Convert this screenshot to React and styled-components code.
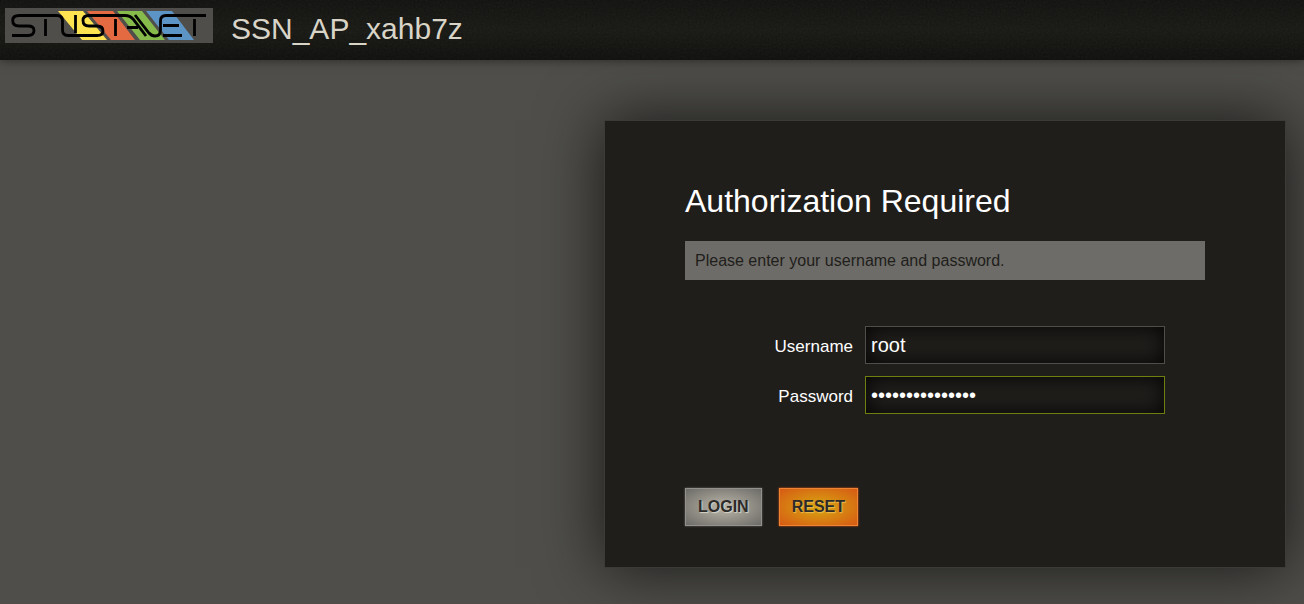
import React from 'react';
import styled, { createGlobalStyle } from 'styled-components';

const GlobalStyle = createGlobalStyle`
  *, *::before, *::after { box-sizing: border-box; }
  body {
    margin: 0;
    min-height: 100vh;
    background: #4f4e4a;
    color: #fff;
    font: 16px/20px "Liberation Sans", Arial, sans-serif;
  }
`;

const Header = styled.header`
  position: relative;
  display: flex;
  align-items: flex-start;
  gap: 18px;
  height: 60px;
  padding: 8px 5px;
  background: linear-gradient(#11110f, #171713 50%, #0e0e0c);
  box-shadow: 0 0 10px rgba(0, 0, 0, 0.5);
`;

const Grain = styled.svg`
  position: absolute;
  inset: 0;
  width: 100%;
  height: 100%;
  opacity: 0.06;
`;

const LogoLink = styled.a`
  position: relative;
  display: block;
  height: 35px;
  background: #4f4e4a;
`;

const HostName = styled.a`
  position: relative;
  color: #d8d4c8;
  font-size: 30px;
  line-height: 42px;
  text-decoration: none;
`;

const Main = styled.main`
  display: flex;
  justify-content: flex-end;
  padding: 60px 18px 36px;
`;

const Panel = styled.form`
  width: 682px;
  max-width: 100%;
  padding: 60px 80px 40px;
  border: 1px solid #3c3b38;
  background: #201e1b;
  box-shadow: 0 0 60px rgba(0, 0, 0, 0.7);
`;

const Title = styled.h1`
  margin: 0 0 20px;
  font-size: 32px;
  font-weight: 400;
  line-height: 40px;
`;

const Notice = styled.p`
  margin: 0 0 46px;
  padding: 10px 10px 9px;
  background: #6e6c68;
  color: #201e1b;
`;

const Fields = styled.div`
  display: grid;
  gap: 12px;
  margin-bottom: 74px;
`;

const Field = styled.div`
  display: grid;
  grid-template-columns: 168px 300px;
  column-gap: 12px;
  align-items: center;
`;

const Label = styled.label`
  font-size: 17px;
  text-align: right;
  padding-top: 4px;
`;

const Input = styled.input`
  width: 100%;
  height: 38px;
  margin: 0;
  padding: 0 5px;
  border: 1px solid ${(p) => (p.$valid ? '#6f7f10' : '#4f4e4a')};
  border-radius: 0;
  outline: none;
  background: #201e1b;
  box-shadow: inset 0 0 20px rgba(0, 0, 0, 0.9);
  color: #fff;
  font: 20px "Liberation Sans", Arial, sans-serif;
`;

const Actions = styled.div`
  display: flex;
  gap: 17px;
  padding-bottom: 1px;
`;

const buttonTones = {
  neutral: { inner: '#bcb7ab', outer: '#6c6b66', edge: '#92918d', glow: '#d8d4c8' },
  warning: { inner: '#d8a810', outer: '#d65a14', edge: '#f08435', glow: '#eebc50' },
};

const Button = styled.button`
  height: 38px;
  padding: 0 12px;
  border: 1px solid ${(p) => buttonTones[p.$tone].edge};
  background: radial-gradient(
    ellipse at center,
    ${(p) => buttonTones[p.$tone].inner},
    ${(p) => buttonTones[p.$tone].outer}
  );
  box-shadow: 0 0 2px ${(p) => buttonTones[p.$tone].outer};
  color: #2c2b29;
  font: bold 16px "Liberation Sans", Arial, sans-serif;
  text-shadow: 1px 1px 1px ${(p) => buttonTones[p.$tone].glow};
  text-transform: uppercase;
  cursor: pointer;
`;

function Logo() {
  return (
    <svg width="208" height="35" viewBox="5 8 208 35" role="img" aria-label="StuStaNet" display="block">
      <path d="M58 11H83L107 40H82Z" fill="#ffe452" />
      <path d="M87 11H113L135 40H111Z" fill="#e46a42" />
      <path d="M117 11H142L165 40H140Z" fill="#86bb4c" />
      <path d="M146 11H172L194 40H169Z" fill="#5c94c6" />
      <g fill="none" stroke="#000" strokeWidth="2.8">
        <path d="M12 35.500H28Q34 35.500 34 30.500Q34 26 28 26H19Q12.700 26 12.700 20.500Q12.700 15.500 19 15.500H57Q62.500 15.500 62.500 21V30Q62.500 35.500 68 35.500H97Q103 35.500 103 31Q103 26 97 26H89Q83 26 83 20.500Q83 15.500 89 15.500H125Q130 15.500 133 19L146 36" />
        <path d="M135 15L149 33Q151.500 36 155 36Q160.500 36 160.500 30V21Q160.500 15.500 166 15.500H206" />
        <path d="M45.500 19V36M75.500 15V33M115.500 19V36M194.500 19V36M127 27.500H138M163 25.500H179M163 35.500H182" />
      </g>
    </svg>
  );
}

export default function App() {
  return (
    <>
      <GlobalStyle />
      <Header>
        <Grain aria-hidden="true">
          <filter id="grain">
            <feTurbulence type="fractalNoise" baseFrequency="0.5" numOctaves="2" />
            <feColorMatrix type="saturate" values="0" />
          </filter>
          <rect width="100%" height="100%" filter="url(#grain)" />
        </Grain>
        <LogoLink href="/">
          <Logo />
        </LogoLink>
        <HostName href="/">SSN_AP_xahb7z</HostName>
      </Header>
      <Main>
        <Panel onSubmit={(e) => e.preventDefault()}>
          <Title>Authorization Required</Title>
          <Notice>Please enter your username and password.</Notice>
          <Fields>
            <Field>
              <Label htmlFor="username">Username</Label>
              <Input id="username" type="text" defaultValue="root" />
            </Field>
            <Field>
              <Label htmlFor="password">Password</Label>
              <Input id="password" type="password" defaultValue="correcthorse123" $valid />
            </Field>
          </Fields>
          <Actions>
            <Button type="submit" $tone="neutral">Login</Button>
            <Button type="reset" $tone="warning">Reset</Button>
          </Actions>
        </Panel>
      </Main>
    </>
  );
}
